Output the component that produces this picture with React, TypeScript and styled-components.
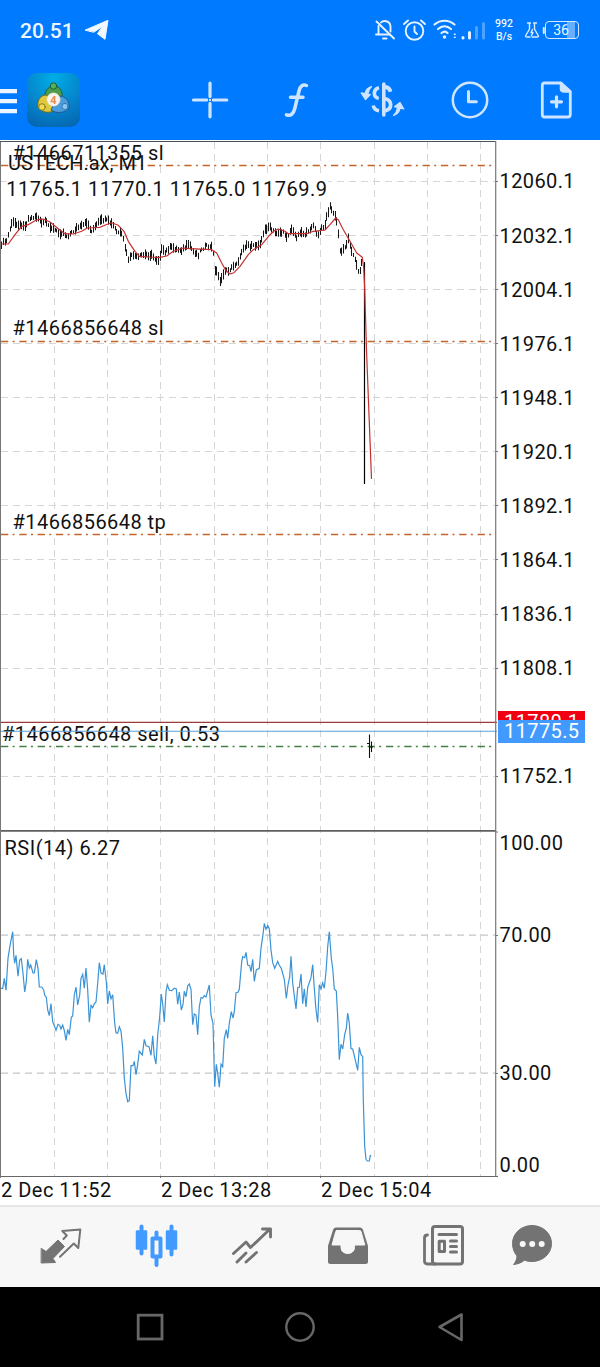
import React from "react";
import styled, { createGlobalStyle } from "styled-components";

const GlobalStyle = createGlobalStyle`
  * { box-sizing: border-box; }
  body { margin: 0; background: #fff; font-family: Roboto, "Liberation Sans", sans-serif; }
`;

const Screen = styled.div`
  width: 600px;
  height: 1367px;
  display: flex;
  flex-direction: column;
  background: #fff;
  overflow: hidden;
`;

const Header = styled.header`
  height: 140px;
  background: #007aff;
  flex: none;
`;

const StatusBar = styled.div`
  height: 60px;
  display: flex;
  align-items: center;
  padding: 0 21px 0 20px;
  color: #eef6ff;
`;

const Clock = styled.span`
  font-size: 21px;
  font-weight: 500;
  line-height: 24px;
  width: 64px;
  padding-top: 1px;
`;

const StatusRight = styled.div`
  margin-left: auto;
  display: flex;
  align-items: center;
`;

const NetSpeed = styled.div`
  width: 24px;
  margin: 0 8px 0 3px;
  font-size: 10.5px;
  font-weight: 500;
  line-height: 13px;
  text-align: center;
`;

const Battery = styled.div`
  width: 34px;
  height: 18px;
  border: 1.5px solid #d6e9ff;
  border-radius: 4px;
  display: flex;
  align-items: center;
  justify-content: center;
  font-size: 14px;
  line-height: 15px;
  padding-right: 2px;
  background: linear-gradient(90deg, transparent 66%, #66afff 66%, #66afff 92%, transparent 92%);
`;

const Toolbar = styled.div`
  height: 80px;
  display: flex;
  align-items: center;
`;

const Actions = styled.div`
  display: grid;
  grid-template-columns: repeat(5, 86.75px);
  justify-items: center;
  margin-left: 86.6px;
`;

const ChartArea = styled.main`
  height: 1038px;
  display: grid;
  grid-template-columns: 498px 1fr;
  flex: none;
`;

const Plot = styled.svg`
  display: block;
  text {
    font-family: Roboto, "Liberation Sans", sans-serif;
    font-size: 20px;
    fill: #111;
  }
`;

const Axis = styled.div`
  font-size: 20px;
  letter-spacing: 0.4px;
  color: #111;
  display: flex;
  flex-direction: column;
`;

const AxisLabel = styled.div<{ $h: number }>`
  height: ${(p) => p.$h}px;
  padding-left: 1.5px;
  display: flex;
  align-items: center;
  flex: none;
`;

const PriceTags = styled.div`
  height: 54.08px;
  display: flex;
  flex-direction: column;
  padding-top: 15.5px;
  flex: none;
`;

const PriceTag = styled.div<{ $bg: string; $h: number }>`
  width: 87px;
  height: ${(p) => p.$h}px;
  flex: none;
  padding-left: 6px;
  overflow: hidden;
  line-height: 23px;
  color: #fff;
  background: ${(p) => p.$bg};
`;

const TimeAxis = styled.div`
  height: 27px;
  display: flex;
  flex: none;
  padding-left: 1px;
  font-size: 20px;
  line-height: 24px;
  letter-spacing: 0.5px;
  color: #111;
`;

const TimeLabel = styled.span`
  width: 160px;
  white-space: nowrap;
`;

const TabBar = styled.nav`
  height: 82px;
  flex: none;
  border-top: 2px solid #e6e6e6;
  background: #f7f7f7;
  display: grid;
  grid-template-columns: repeat(5, 96px) 80px;
  padding: 0 0 2px 12px;
  justify-items: center;
  align-items: center;
`;

const SystemNav = styled.div`
  height: 80px;
  background: #000;
  display: grid;
  grid-template-columns: repeat(3, 150px);
  justify-content: center;
  justify-items: center;
  align-items: center;
`;

const Glyph = styled.svg<{ $tone: string }>`
  display: block;
  flex: none;
  color: ${(p) => p.$tone};
  fill: none;
  stroke: currentColor;
  stroke-linecap: round;
  stroke-linejoin: round;
`;

type IconProps = { box: string; tone?: string; children: React.ReactNode };
const Icon = ({ box, tone = "#cfe5ff", children }: IconProps) => {
  const [, , w, h] = box.split(" ").map(Number);
  return (
    <Glyph viewBox={box} width={w} height={h} $tone={tone}>
      {children}
    </Glyph>
  );
};

type Pt = [number, number];
const place = (pts: Pt[], dx: number, dy: number): Pt[] =>
  pts.map(([x, y]) => [x / 3 + dx, y / 3 + dy]);
const toPath = (pts: Pt[]) =>
  pts.map(([x, y], i) => `${i ? "L" : "M"}${x.toFixed(1)} ${y.toFixed(1)}`).join("");

// Mid prices, stored in thirds of a pixel, one list per half of the session.
const MID: Pt[] = [
  ...place([[2,320],[10,314],[20,310],[30,272],[38,252],[50,256],[60,262],[68,258],[76,266],[85,242],[96,240],[108,233],[115,242],[125,257],[135,250],[145,262],[160,272],[175,285],[190,283],[200,294],[215,285],[230,270],[245,265],[262,252],[272,280],[285,268],[298,250],[312,245],[325,250],[340,262],[350,282],[360,284],[368,295],[376,332],[385,364],[400,350],[412,360],[425,352],[440,350],[455,352],[468,364],[475,366],[485,335],[495,345],[508,328],[520,330],[535,335],[547,335],[560,325],[570,322],[580,342]], 0, 138),
  ...place([[10,340],[25,350],[35,332],[50,325],[65,328],[71,345],[75,400],[82,400],[90,428],[97,424],[103,395],[112,400],[125,390],[140,375],[150,360],[158,330],[165,325],[172,317],[180,325],[190,325],[200,322],[210,315],[217,300],[225,275],[237,265],[247,278],[258,285],[270,282],[280,285],[292,295],[305,272],[312,288],[322,298],[330,280],[345,288],[355,285],[362,268],[370,262],[378,283],[385,294],[392,275],[405,260],[412,230],[420,206],[428,220],[437,240],[443,258],[448,325],[452,343],[460,335],[470,315],[476,300],[483,340],[492,350],[500,378],[505,403],[512,390],[517,370],[521,385]], 190, 138),
];

const AVERAGE: Pt[] = [
  ...place([[2,318],[25,318],[45,290],[65,265],[85,260],[105,248],[118,244],[130,243],[150,252],[175,272],[195,287],[220,288],[245,280],[262,270],[300,268],[318,260],[335,254],[355,262],[372,280],[385,310],[405,340],[418,355],[450,357],[480,358],[500,354],[520,340],[550,330]], 0, 138),
  ...place([[0,332],[65,335],[80,345],[95,375],[108,398],[120,408],[132,404],[150,385],[175,350],[190,335],[215,320],[240,290],[252,279],[265,273],[285,280],[295,287],[350,287],[370,280],[405,276],[420,260],[437,240],[445,245],[460,275],[480,310],[500,345],[517,358],[521,390],[524,450]], 190, 138),
  [366.5, 350],
  [371.5, 479],
];

const RSI: Pt[] = [
  ...place([[2,265],[8,265],[13,235],[18,271],[24,175],[30,137],[38,95],[41,165],[44,190],[48,166],[54,229],[59,180],[64,176],[69,220],[74,276],[79,245],[83,178],[88,204],[92,195],[99,219],[103,219],[109,179],[114,205],[118,261],[125,261],[131,270],[134,286],[139,292],[143,330],[148,347],[153,311],[158,365],[168,391],[174,373],[179,376],[183,387],[188,375],[193,391],[198,421],[203,388],[208,404],[214,352],[218,348],[223,285],[228,261],[233,315],[239,285],[243,235],[248,223],[253,265],[258,204],[263,270],[268,367],[273,316],[278,323],[283,311],[288,306],[293,250],[298,188],[303,219],[309,222],[313,194],[319,245],[323,312],[328,273],[333,296],[338,284],[344,370],[348,398],[353,400],[358,380],[363,393],[368,445],[373,535],[378,580],[383,605],[388,602],[393,497],[399,497],[403,484],[408,524],[413,493],[418,454],[427,465],[433,418],[438,437],[447,440],[453,466],[458,407],[463,470],[468,492],[473,405],[479,350],[484,282],[488,312],[493,366],[498,275],[502,254],[508,271],[515,272],[523,265],[529,267],[533,313],[538,276],[544,330],[549,313],[553,274],[558,290],[563,258],[568,252]], 0, 900),
  ...place([[3,268],[8,374],[13,342],[18,345],[23,404],[28,320],[33,293],[38,294],[43,287],[48,291],[58,255],[63,345],[69,370],[74,560],[79,493],[83,520],[88,562],[93,493],[98,500],[103,415],[109,389],[113,415],[118,370],[124,335],[129,354],[133,335],[138,278],[144,277],[148,268],[155,185],[158,170],[164,173],[168,157],[173,195],[179,197],[183,215],[188,178],[193,244],[199,210],[208,205],[213,145],[218,110],[223,70],[228,88],[233,77],[238,86],[243,150],[248,188],[254,205],[263,184],[268,196],[274,205],[283,238],[289,295],[294,255],[299,230],[303,169],[308,250],[318,327],[323,263],[328,262],[333,222],[338,311],[343,266],[348,321],[353,262],[363,233],[368,194],[373,265],[378,330],[383,367],[388,254],[393,267],[398,248],[403,265],[408,215],[413,140],[418,95],[424,175],[428,205],[433,267],[439,273],[443,350],[448,479],[453,433],[458,447],[464,403],[469,385],[473,339],[478,370],[483,446],[488,447],[503,511],[508,442],[513,464],[518,470],[520,600],[524,740],[528,778],[532,783],[538,783],[541,767],[544,767]], 190, 900),
];

const midAt = (x: number) => {
  const i = MID.findIndex((p) => p[0] >= x);
  if (i <= 0) return i === 0 ? MID[0][1] : MID[MID.length - 1][1];
  const [a, b] = [MID[i - 1], MID[i]];
  return a[1] + ((b[1] - a[1]) * (x - a[0])) / (b[0] - a[0]);
};

const noise = (n: number) => {
  const v = Math.sin(n * 12.9898) * 43758.5453;
  return v - Math.floor(v);
};

const BARS = Array.from({ length: 217 }, (_, i) => {
  const x = 1.7 + i * 1.667;
  const y = midAt(x) + (noise(i + 1) - 0.5) * 3;
  const reach = 1.7 + noise(i + 500) * 3.4;
  return `M${Math.floor(x) + 0.5} ${(y - reach).toFixed(1)}V${(y + reach).toFixed(1)}`;
}).join("");

const GRID_X = [54.5, 107.5, 160.5, 214.5, 267.5, 320.5, 374.5, 427.5, 480.5];
const GRID_Y = Array.from({ length: 12 }, (_, i) => Math.floor(181.4 + i * 54.08) + 0.5).filter((_, i) => i !== 10);
const ORDERS = [
  { y: 165.5, color: "#c4642a" },
  { y: 341.5, color: "#c4642a" },
  { y: 534.5, color: "#c4642a" },
  { y: 746.5, color: "#418145" },
];
const NOTES = [
  { x: 12.5, y: 159.5, text: "#1466711355 sl", w: 150, gap: 0.48 },
  { x: 8, y: 170, text: "USTECH.ax, M1", w: 138, gap: 0 },
  { x: 6.3, y: 196, text: "11765.1 11770.1 11765.0 11769.9", w: 322, gap: 0.5 },
  { x: 12.5, y: 335, text: "#1466856648 sl", w: 150, gap: 0.48 },
  { x: 12.5, y: 528.5, text: "#1466856648 tp", w: 153, gap: 0.45 },
  { x: 2, y: 741, text: "#1466856648 sell, 0.53", w: 218, gap: 0.46 },
  { x: 4.5, y: 854.5, text: "RSI(14) 6.27", w: 116, gap: 0.5 },
];

const Chart = () => (
  <Plot viewBox="0 140 498 1038" width="498" height="1038">
    <g stroke="#d6d6d6" strokeWidth="1" strokeDasharray="7 5">
      {GRID_X.map((x) => (
        <path key={x} d={`M${x} 142V1176`} />
      ))}
      {GRID_Y.map((y) => (
        <path key={y} d={`M1 ${y}H495`} />
      ))}
      <path d="M1 935.2H495M1 1073.2H495" stroke="#c6c6c6" strokeWidth="1.3" />
    </g>
    {NOTES.map((n) => (
      <rect key={n.text} x={n.x} y={n.y - 19} width={n.w} height="24" fill="#fff" />
    ))}
    {ORDERS.map((o) => (
      <path key={o.y} d={`M1 ${o.y}H495`} stroke={o.color} strokeWidth="1.3" strokeDasharray="7.3 4.3 2 4.73" />
    ))}
    <path d={BARS} stroke="#161616" strokeWidth="1.05" />
    <path d="M364.5 262V484" stroke="#000" strokeWidth="1.2" />
    <path d="M369.5 734.5V758M371.5 741.5V752M367 743.5h2M370 747h3" stroke="#111" strokeWidth="1.1" />
    <path d={toPath(AVERAGE)} fill="none" stroke="#c43030" strokeWidth="1.2" strokeLinejoin="round" />
    <path d={toPath(RSI)} fill="none" stroke="#3b93d6" strokeWidth="1.2" />
    {NOTES.map((n) => (
      <text key={n.text} x={n.x} y={n.y} letterSpacing={n.gap}>
        {n.text}
      </text>
    ))}
    <path d="M1 722.3H497" stroke="#a03a3a" strokeWidth="1.3" />
    <path d="M1 731.3H497" stroke="#5a9fd4" strokeWidth="1.1" />
    <path d="M0 141.5H496" stroke="#47535f" />
    <path d="M0 830.9H496" stroke="#5f5f5f" strokeWidth="1.7" />
    <path d="M0 1176.5H498M160.5 1176v2M320.5 1176v2" stroke="#666" />
    <path d="M.5 142V1178" stroke="#777" />
    <path d="M495.7 141V1177" stroke="#777" strokeWidth="1.2" />
    <path d={[...GRID_Y, 832, 935.5, 1073.5].map((y) => `M496 ${y}h2`).join("")} stroke="#777" />
  </Plot>
);

const Logo = () => (
  <Icon box="27 73 53 54">
    <defs>
      <radialGradient id="sky" cx=".5" cy=".1" r="1">
        <stop offset="0" stopColor="#00aee6" />
        <stop offset=".55" stopColor="#0584cc" />
        <stop offset="1" stopColor="#0563ae" />
      </radialGradient>
    </defs>
    <rect x="27" y="73" width="53" height="54" rx="10" fill="url(#sky)" stroke="none" />
    <g strokeWidth="1">
      <path d="M45 98c-1-6 3-12 9-12s9 6 8 11l-8 3z" fill="#4c9c4a" stroke="#1e5f3e" />
      <path d="M46 95c-6 0-9 6-8 12 5 7 13 6 17 3l-3-10z" fill="#e0c83c" stroke="#6d6a20" />
      <path d="M59 96c7 0 11 6 10 12-3 5-13 6-18 2l4-8z" fill="#4b9ddb" stroke="#1c5a92" />
      <circle cx="53.5" cy="86" r="3.2" fill="#52b353" stroke="#1e5f3e" />
      <circle cx="42" cy="107" r="3.3" fill="#f2dc52" stroke="#8a7a20" />
      <circle cx="65" cy="106.5" r="3.1" fill="#8cc8f5" stroke="#2e75b5" />
      <circle cx="53.5" cy="99.5" r="6.7" fill="#f7f4ee" stroke="#d9cdbc" strokeWidth=".5" />
    </g>
    <text x="53.5" y="103.5" textAnchor="middle" fontSize="11" fontWeight="700" fill="#f08a4b" stroke="none">
      4
    </text>
  </Icon>
);

const StatusIcons = () => (
  <Icon box="373 16 116 28" tone="#e6f2ff">
    {/* muted bell */}
    <g strokeWidth="1.9">
      <path d="M376.5 21.5L394 38.5" />
      <path d="M378.5 26v8.5h-2.500h14M381 22.5c2-2.300 9-2.300 9.500 4v5" />
      <path d="M383 38.5h3.500" />
    </g>
    {/* alarm */}
    <g strokeWidth="1.9">
      <circle cx="414.5" cy="31" r="8.8" />
      <path d="M414.5 26.5v5l2.500 2.500M404 24l4-3.500M421 20.5l4 3.500" />
    </g>
    {/* wifi */}
    <g strokeWidth="2.2">
      <path d="M434.5 24.5c6-5 14-5 20 0M438 29c4-3.500 9-3.500 13 0M441.5 33c2-1.600 4.500-1.600 6 0" />
      <circle cx="444.5" cy="37" r="1" fill="currentColor" strokeWidth="1.5" />
    </g>
    <path d="M454.5 34.2h.6M454.5 37.2h.6" strokeWidth="1.6" />
    {/* signal */}
    <g strokeWidth="3">
      <path d="M463 37.5v.5M469.5 32.5v5.500" />
      <path d="M476.5 27.5v10.500M483.5 23.5v14.500" stroke="#4ea3ff" />
    </g>
  </Icon>
);

const App = () => (
  <Screen>
    <GlobalStyle />
    <Header>
      <StatusBar>
        <Clock>20.51</Clock>
        <Icon box="84 19 26 24" tone="#f2f8ff">
          <path d="M85.5 31L108 21.3l-3 19-7.500-5.500 5-7.500-8.500 5.800z" fill="currentColor" strokeWidth="1" />
        </Icon>
        <StatusRight>
          <StatusIcons />
          <NetSpeed>
            992
            <br />
            B/s
          </NetSpeed>
          <Icon box="524 20 21 20" tone="#dcecff">
            <path d="M527.5 23h3M533.5 23h3M529.5 23v6l-4 7c0 1 .5 1 1.500 1h3M534.5 23v6l4 7c0 1-.5 1-1.500 1h-5M532.5 29.5l-1.500 3h2l-1.500 3" strokeWidth="1.4" />
            <path d="M543.8 28v5" strokeWidth="2" />
          </Icon>
          <Battery>36</Battery>
        </StatusRight>
      </StatusBar>
      <Toolbar>
        <Icon box="0 73 27 54" tone="#edf6ff">
          <path d="M0 91.2h17M0 101.2h17M0 111.2h17" strokeWidth="4.2" strokeLinecap="butt" />
        </Icon>
        <Logo />
        <Actions>
          <Icon box="188 78 44 44">
            <path d="M193.5 100h12.500M214 100h12.800M210 83.2v12.800M210 104v12.800" strokeWidth="3.2" />
            <circle cx="210" cy="100" r="1.2" fill="currentColor" stroke="none" />
            <path d="M206 100h2M212 100h2M210 96v2M210 102v2" strokeWidth="2.4" strokeLinecap="butt" />
          </Icon>
          <Icon box="275 78 44 44">
            <path d="M286.5 114.8c4.500 1.500 7-1.300 8.300-6.300l4.200-17.500c1.200-5.300 4-7 7.500-5.500M290.5 97.3h12.500" strokeWidth="3.5" />
          </Icon>
          <Icon box="361 78 46 44">
            <path d="M384.8 84v31" strokeWidth="3.6" />
            <path d="M380 87.8c-6 1.700-6.300 9-.3 10.800M374.3 105.5c.5 3 2.500 4.800 5.700 5.200" strokeWidth="3.6" strokeLinecap="butt" />
            <path d="M386 87c3 .3 4.800 1.700 5.500 4.700M386 98.5c7.500 2 7.500 10.800 0 12.300" strokeWidth="3.8" strokeLinecap="butt" />
            <path d="M372.5 86.5c-4 1.200-6 3.800-6.500 7.200l-3.800-.8 4.300 6.800 4.800-5-2.500-.5c.2-3 1.500-5.500 3.700-7.700z" fill="currentColor" strokeWidth="1.2" />
            <path d="M394.5 115.5c4-1.200 6-3.800 6.600-7.300l3.700.8-3.800-6.500-5.500 4.200 3 .8c-.3 3-1.800 5.800-4 8z" fill="currentColor" strokeWidth="1.2" />
          </Icon>
          <Icon box="448 78 44 44">
            <circle cx="470" cy="100" r="17.2" strokeWidth="2.5" />
            <path d="M468.5 91.5v10.300h7.800" strokeWidth="3" />
          </Icon>
          <Icon box="535 78 44 44">
            <path d="M544.5 83h16.500l9.300 8.500v23c0 1.500-.8 2.500-2.500 2.500h-23.300c-1.500 0-2.200-1-2.200-2.500v-29c0-1.500.7-2.500 2.200-2.500z" strokeWidth="2.8" />
            <path d="M560.5 82.5l10 9.500h-7c-2-.2-3-1.500-3-3z" fill="currentColor" strokeWidth="1.5" />
            <path d="M551.5 101.8h10M556.5 96.8v10" strokeWidth="3.2" />
          </Icon>
        </Actions>
      </Toolbar>
    </Header>

    <ChartArea>
      <Chart />
      <Axis>
        <AxisLabel $h={14.4} />
        {["12060.1", "12032.1", "12004.1", "11976.1", "11948.1", "11920.1", "11892.1", "11864.1", "11836.1", "11808.1"].map((v) => (
          <AxisLabel key={v} $h={54.08}>
            {v}
          </AxisLabel>
        ))}
        <PriceTags>
          <PriceTag $bg="#f00010" $h={9}>
            11780.1
          </PriceTag>
          <PriceTag $bg="#429aff" $h={23}>
            11775.5
          </PriceTag>
        </PriceTags>
        <AxisLabel $h={54.08}>11752.1</AxisLabel>
        <AxisLabel $h={80}>100.00</AxisLabel>
        <AxisLabel $h={104}>70.00</AxisLabel>
        <AxisLabel $h={172}>30.00</AxisLabel>
        <AxisLabel $h={12}>0.00</AxisLabel>
      </Axis>
    </ChartArea>
    <TimeAxis>
      <TimeLabel>2 Dec 11:52</TimeLabel>
      <TimeLabel>2 Dec 13:28</TimeLabel>
      <TimeLabel>2 Dec 15:04</TimeLabel>
    </TimeAxis>

    <TabBar>
      <Icon box="38 1223 44 46" tone="#737373">
        <path d="M41.5 1248.5l4.500 3 12-11.500 6.500 6.500-11.500 12 2.500 4-14 .5z" fill="currentColor" strokeWidth="1" />
        <path d="M60 1256.8l13.800-13.300 4.500 4.500 2-18.500-18 1.500 4.500 4.500-3.300 3.500" strokeWidth="2" />
      </Icon>
      <Icon box="134 1223 44 46" tone="#429aff">
        <path d="M141.5 1226.5v27M171.5 1226.5v28M156.5 1232.5v5M156.5 1258v7" strokeWidth="4" />
        <path d="M137 1231.5h9v17h-9zM167 1231.5h9v17h-9z" fill="currentColor" strokeWidth="2.5" />
        <path d="M152.5 1238.5h8v18h-8z" strokeWidth="4" />
      </Icon>
      <Icon box="230 1223 44 46" tone="#737373">
        <path d="M233.5 1253.5l12.500-11.500 4.500 5.500 19-18M262.5 1229h8v8M237 1262l9-9M246 1262l10.500-9.500" strokeWidth="2.9" />
      </Icon>
      <Icon box="326 1223 44 46" tone="#737373">
        <path d="M336 1228.5h24c1 0 1.500.5 2 1.500l5 16v15.500c0 1-.5 1.500-1.500 1.500h-35c-1 0-1.500-.5-1.500-1.500v-15.500l5-16c.5-1 1-1.500 2-1.500z" fill="currentColor" strokeWidth="2" />
        <path d="M337 1230.5h22.500c1 0 1.300.3 1.600 1.200l3.700 13.300h-8.800c-1.500 0-1.500.8-1.500 2.500 0 8-13.500 8-13.500 0 0-1.700 0-2.500-1.500-2.500h-7.500l3.700-13.300c.3-.9.600-1.200 1.300-1.200z" fill="#f7f7f7" stroke="#f7f7f7" strokeWidth="1" />
      </Icon>
      <Icon box="422 1223 46 46" tone="#737373">
        <rect x="433.5" y="1226.500" width="30" height="37.5" rx="2.5" strokeWidth="3" />
        <path d="M428.5 1235c-2.500 0-3 1-3 3v23c0 2 1 3 3 3h8" strokeWidth="2.8" />
        <path d="M440 1234.5h17.500M451.5 1241h6M451.5 1246.5h6M451.5 1252h6" strokeWidth="3" />
        <rect x="440.2" y="1241.2" width="5.3" height="10.3" strokeWidth="3" />
      </Icon>
      <Icon box="510 1223 44 46" tone="#737373">
        <path d="M532 1225.5c11 0 19.500 8 19.500 18s-8.500 18-19.500 18c-3 0-5-.4-7.500-1.300-3 2.500-7 4-11 4.300 2-2.200 3.300-5 3.500-8.500-2.500-3-4.500-7-4.500-12.500 0-10 8.500-18 19.500-18z" fill="currentColor" strokeWidth="1" />
        <path d="M522.7 1244h.01M532.2 1244h.01M541.7 1244h.01" stroke="#f7f7f7" strokeWidth="6" />
      </Icon>
    </TabBar>

    <SystemNav>
      <Icon box="132 1309 36 36" tone="#676767">
        <rect x="138.2" y="1315.2" width="23.8" height="23.8" strokeWidth="2.8" strokeLinejoin="miter" />
      </Icon>
      <Icon box="282 1309 36 36" tone="#676767">
        <circle cx="300" cy="1327" r="13.7" strokeWidth="2.4" />
      </Icon>
      <Icon box="432 1309 36 36" tone="#676767">
        <path d="M439.5 1327l22-12.500v25.500z" strokeWidth="2.6" />
      </Icon>
    </SystemNav>
  </Screen>
);

export default App;
